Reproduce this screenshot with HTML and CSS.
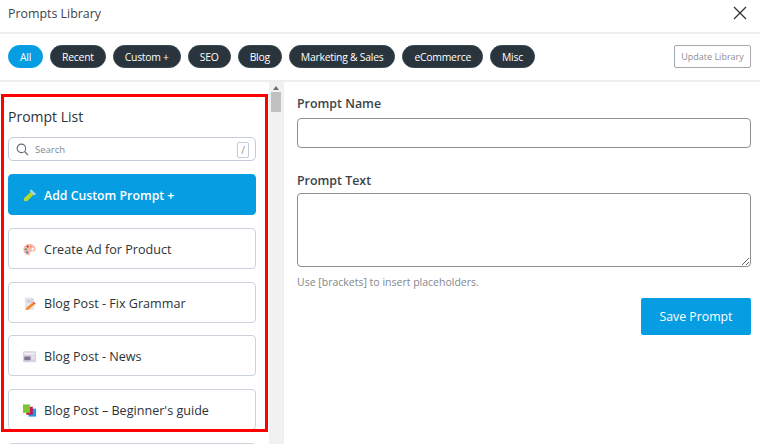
FILE: index.html
```html
<!DOCTYPE html>
<html lang="en">
<head>
    <meta charset="UTF-8">
    <meta name="viewport" content="width=device-width, initial-scale=1.0">
    <title>Prompts Library</title>
    <link rel="stylesheet" href="styles.css">
</head>
<body>
    <div class="modal">
        <header class="modal-header">
            <h1>Prompts Library</h1>
            <button class="close-button" aria-label="Close">
                <svg width="14" height="14" viewBox="0 0 14 14"><path d="M1 1 13 13M13 1 1 13" stroke="#2b2f33" stroke-width="1.2" fill="none"/></svg>
            </button>
        </header>

        <div class="toolbar">
            <div class="tag-list">
                <button class="tag active">All</button>
                <button class="tag">Recent</button>
                <button class="tag">Custom +</button>
                <button class="tag">SEO</button>
                <button class="tag">Blog</button>
                <button class="tag">Marketing &amp; Sales</button>
                <button class="tag">eCommerce</button>
                <button class="tag">Misc</button>
            </div>
            <button class="update-button">Update Library</button>
        </div>

        <div class="modal-body">
            <aside class="sidebar">
                <div class="prompt-panel">
                    <h2>Prompt List</h2>
                    <div class="search-box">
                        <svg width="13" height="13" viewBox="0 0 14 14"><circle cx="5.800" cy="5.800" r="4.600" stroke="#5f6b76" stroke-width="1.200" fill="none"/><path d="M9.200 9.200 13 13" stroke="#5f6b76" stroke-width="1.300"/></svg>
                        <input type="text" placeholder="Search">
                        <span class="slash-key">/</span>
                    </div>
                    <ul class="prompt-list">
                        <li class="prompt-item primary">
                            <svg class="prompt-icon" width="15" height="15" viewBox="0 0 16 16"><path d="M9.500 4 12.500 7 6 13.500c-1 .9-2.800.9-3.600.1s-.7-2.400.2-3.300z" fill="#b5d92f"/><path d="M10 1.500 15 6.500 13 8 8 3z" fill="#a9d6ee"/></svg>
                            Add Custom Prompt +
                        </li>
                        <li class="prompt-item">
                            <svg class="prompt-icon" width="15" height="15" viewBox="0 0 16 16"><path d="M7.500 2C3.800 2 1.500 4.700 1.500 8s2.500 6 5.800 6c1.800 0 1.700-1.300 1.400-2.200-.3-1 .2-1.800 1.300-1.800h2.500c1.300 0 2-1 2-2.300C14.500 4.300 11.500 2 7.500 2z" fill="#f9b9ad"/><circle cx="6" cy="4.800" r="1.200" fill="#d4257a"/><circle cx="9.500" cy="4.500" r="1" fill="#f0a02c"/><circle cx="4" cy="7.800" r="1.200" fill="#2fae5c"/><circle cx="5.500" cy="11" r="1.200" fill="#2f7fd6"/><circle cx="11.500" cy="7.500" r="1.300" fill="#fff"/></svg>
                            Create Ad for Product
                        </li>
                        <li class="prompt-item">
                            <svg class="prompt-icon" width="15" height="15" viewBox="0 0 16 16"><path d="M3 1.500h7l3 3V15H3z" fill="#e9e5f1"/><path d="M10 1.500 13 4.500H10z" fill="#c9c2d8"/><path d="M5 4.500h4M5 6.500h6" stroke="#bdb6cc"/><path d="M4.500 12.500 11.500 7l2 2-6.500 5.500-3 .5z" fill="#f58a2a"/><path d="M11.500 7l1-.8 2 2-1 .8z" fill="#e8324f"/></svg>
                            Blog Post - Fix Grammar
                        </li>
                        <li class="prompt-item">
                            <svg class="prompt-icon" width="15" height="15" viewBox="0 0 16 16"><rect x="1" y="2.500" width="14" height="11.500" rx="1.500" fill="#d9d2e3"/><rect x="2.500" y="4" width="11" height="2" fill="#f3f0f7"/><rect x="2.500" y="8" width="6.500" height="4" fill="#7f7690"/><path d="M10.500 8.500h3M10.500 10.500h3" stroke="#f3f0f7"/></svg>
                            Blog Post - News
                        </li>
                        <li class="prompt-item">
                            <svg class="prompt-icon" width="15" height="15" viewBox="0 0 16 16"><rect x="7" y="6" width="8" height="8.500" fill="#1e9be8"/><rect x="4.500" y="4" width="7" height="8.500" fill="#c8174f"/><rect x="1" y="1.500" width="7.500" height="9" fill="#7cc62e"/></svg>
                            Blog Post – Beginner's guide
                        </li>
                        <li class="prompt-item"></li>
                    </ul>
                </div>
                <div class="scrollbar">
                    <span class="scroll-arrow"></span>
                    <span class="scroll-thumb"></span>
                </div>
                <div class="highlight-box"></div>
            </aside>

            <main class="editor">
                <label for="prompt-name">Prompt Name</label>
                <input type="text" id="prompt-name" class="name-input">
                <label for="prompt-text" class="text-label">Prompt Text</label>
                <textarea id="prompt-text" class="text-input"></textarea>
                <p class="hint">Use [brackets] to insert placeholders.</p>
                <button class="save-button">Save Prompt</button>
            </main>
        </div>
    </div>
</body>
</html>
```

FILE: styles.css
```css
* {
    box-sizing: border-box;
}

body {
    font-family: "Open Sans", "Noto Sans", sans-serif;
    margin: 0;
    background-color: #fff;
    color: #2c3338;
}

button {
    font-family: inherit;
}

.modal {
    height: 444px;
    display: flex;
    flex-direction: column;
    overflow: hidden;
}

.modal-header {
    height: 34px;
    flex: none;
    display: flex;
    justify-content: space-between;
    align-items: center;
    padding: 0 13px 6px 8px;
    border-bottom: 2px solid #eceef1;
}

.modal-header h1 {
    margin: 0;
    font-size: 12.400px;
    font-weight: 400;
    color: #3c434a;
}

.close-button {
    border: none;
    background: none;
    padding: 0;
    display: flex;
}

.toolbar {
    height: 48px;
    flex: none;
    display: flex;
    justify-content: space-between;
    align-items: center;
    padding: 0 9px 1px 8px;
    border-bottom: 2px solid #eceef1;
}

.tag-list {
    display: flex;
    gap: 7px;
}

.tag {
    height: 23px;
    padding: 0 11px;
    border: 1px solid #37464f;
    border-radius: 12px;
    background-color: #2a343c;
    color: #fff;
    font-size: 10.400px;
    letter-spacing: -0.25px;
    white-space: nowrap;
}

.tag.active {
    border-color: #069de3;
    background-color: #069de3;
}

.update-button {
    width: 77px;
    height: 23px;
    padding: 0;
    border: 1px solid #a7aaad;
    border-radius: 2px;
    background-color: #fff;
    color: #8c8f94;
    font-size: 9px;
    white-space: nowrap;
}

.modal-body {
    flex: 1;
    display: flex;
    min-height: 0;
}

.sidebar {
    position: relative;
    width: 284px;
    flex: none;
    display: flex;
    border-right: 1px solid #eceef1;
}

.prompt-panel {
    width: 269px;
    padding: 25px 13px 0 8px;
    overflow: hidden;
}

.prompt-panel h2 {
    margin: 0 0 10px;
    font-size: 14px;
    line-height: 20px;
    font-weight: 500;
    color: #2c3338;
}

.search-box {
    height: 24px;
    display: flex;
    align-items: center;
    gap: 5px;
    padding: 0 6px 0 7px;
    border: 1px solid #c3ccd8;
    border-radius: 5px;
}

.search-box input {
    flex: 1;
    min-width: 0;
    border: none;
    outline: none;
    padding: 0 0 0 1px;
    font-family: inherit;
    font-size: 9.500px;
    color: #2c3338;
}

.search-box input::placeholder {
    color: #7e8993;
}

.slash-key {
    width: 12px;
    height: 16px;
    margin-top: 2px;
    border: 1px solid #c3ccd8;
    border-radius: 2px;
    font-size: 10px;
    line-height: 14px;
    text-align: center;
    color: #8c8f94;
}

.prompt-list {
    list-style: none;
    margin: 13px 0 0;
    padding: 0;
    display: flex;
    flex-direction: column;
    gap: 12.750px;
}

.prompt-item {
    height: 41px;
    flex: none;
    display: flex;
    align-items: center;
    gap: 7px;
    padding: 2px 13px 0;
    border: 1px solid #cbd2dc;
    border-radius: 4px;
    background-color: #fff;
    font-size: 12.600px;
    font-weight: 500;
    color: #2c3338;
    white-space: nowrap;
}

.prompt-item.primary {
    border-color: #069de3;
    background-color: #069de3;
    color: #fff;
    font-size: 12.300px;
    font-weight: 600;
}

.prompt-icon {
    flex: none;
}

.scrollbar {
    width: 14px;
    flex: none;
    display: flex;
    flex-direction: column;
    align-items: center;
    background-color: #f1f1f1;
}

.scroll-arrow {
    width: 0;
    height: 0;
    margin-top: 4px;
    border-left: 3.500px solid transparent;
    border-right: 3.500px solid transparent;
    border-bottom: 4px solid #6f6f6f;
}

.scroll-thumb {
    width: 10px;
    height: 20px;
    margin-top: 2px;
    background-color: #c1c1c1;
}

/* red annotation drawn on top of the list */
.highlight-box {
    position: absolute;
    left: 1px;
    top: 12px;
    width: 267px;
    height: 338px;
    border: 3px solid #f00;
    pointer-events: none;
}

.editor {
    flex: 1;
    display: flex;
    flex-direction: column;
    padding: 13px 9px 0 13px;
}

.editor label {
    font-size: 12.400px;
    line-height: 18px;
    font-weight: 550;
    color: #3c434a;
}

.name-input {
    height: 30px;
    margin-top: 5px;
    border: 1px solid #8c8f94;
    border-radius: 4px;
    outline: none;
}

.editor .text-label {
    margin-top: 24px;
}

.text-input {
    height: 74px;
    margin-top: 3px;
    border: 1px solid #8c8f94;
    border-radius: 4px;
    outline: none;
    resize: vertical;
}

.hint {
    margin: 8px 0 0;
    font-size: 10.500px;
    line-height: 14px;
    color: #82878c;
}

.save-button {
    width: 110px;
    height: 37px;
    margin-top: 9px;
    align-self: flex-end;
    border: none;
    border-radius: 2px;
    background-color: #069de3;
    color: #fff;
    font-size: 12.300px;
}
```
